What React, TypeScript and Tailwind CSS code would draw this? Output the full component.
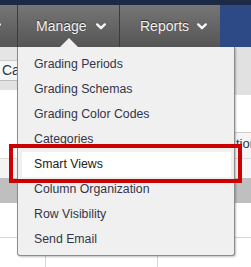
const items = [
  "Grading Periods",
  "Grading Schemas",
  "Grading Color Codes",
  "Categories",
  "Smart Views",
  "Column Organization",
  "Row Visibility",
  "Send Email",
];

function Chevron({ className = "" }: { className?: string }) {
  return (
    <svg width="10" height="7" viewBox="0 0 10 7" className={className}>
      <path d="M1.2 1.4 L5 5.2 L8.8 1.4" fill="none" stroke="#f4f4f4" strokeWidth="2.4" strokeLinecap="round" strokeLinejoin="round" />
    </svg>
  );
}

export default function App() {
  return (
    <div className="relative w-[251px] h-[267px] overflow-hidden bg-white font-['Liberation_Sans',Arial,sans-serif]">
      {/* top nav */}
      <div className="flex h-[47px] border-t-[5px] border-[#1d2a46] bg-gradient-to-b from-[#767676] to-[#555555]">
        <div className="w-[17px] flex items-center overflow-hidden">
          <Chevron className="ml-[-9px] shrink-0" />
        </div>
        <div className="w-px bg-[#3c3c3c]" />
        <div className="w-[101px] flex items-center pl-[18px] gap-[9px] text-[14px] text-[#f0f0f0] [text-shadow:0_-1px_1px_rgba(0,0,0,0.55)]">
          <span>Manage</span>
          <Chevron />
        </div>
        <div className="w-px bg-[#3c3c3c]" />
        <div className="w-[100px] flex items-center pl-[20px] gap-[8px] text-[14px] text-[#f0f0f0] [text-shadow:0_-1px_1px_rgba(0,0,0,0.55)]">
          <span>Reports</span>
          <Chevron />
        </div>
        <div className="flex-1 bg-[#2e4a86]" />
      </div>

      {/* table behind the menu */}
      <div className="flex h-[190px]">
        <div className="w-[17px] flex flex-col overflow-hidden">
          <div className="h-[13px] bg-[#e5e5e5]" />
          <div className="h-[20px] bg-[#f6f6f6] border-t border-[#cccccc] pl-[2px] text-[14px] leading-[19px] text-[#2c3650] whitespace-nowrap">
            Categories
          </div>
          <div className="h-[10px] bg-[#e2e2e2] border-t border-[#bdbdbd]" />
          <div className="h-[68px] bg-white" />
          <div className="h-[20px] bg-[#f4f4f4] border-t border-[#dddddd]" />
          <div className="h-[25px] bg-[#bfbfbf]" />
          <div className="flex-1 bg-white" />
        </div>
        <div className="flex-1 bg-white" />
        <div className="w-[16px] flex flex-col overflow-hidden">
          <div className="h-[48px] bg-[#e1e1e1]" />
          <div className="h-[37px] bg-white" />
          <div className="h-[26px] bg-[#f5f5f5] border-t border-[#cccccc] pl-px text-[13px] leading-[21px] text-[#2c3650] whitespace-nowrap">
            tion
          </div>
          <div className="h-[20px] bg-[#f7f7f7] border-t border-[#dddddd]" />
          <div className="h-[25px] bg-[#bfbfbf]" />
          <div className="flex-1 bg-white" />
        </div>
      </div>
      <div className="flex h-[30px] border-t border-[#d6d6d6]">
        <div className="w-[45px]" />
        <div className="w-[112px] border-l border-[#d6d6d6]" />
        <div className="flex-1 border-l border-[#d6d6d6]" />
      </div>

      {/* dropdown notch */}
      <svg width="20" height="10" viewBox="0 0 20 10" className="absolute left-[59px] top-[38px]">
        <polygon points="0,10 10,0 20,10" fill="#f0f0f0" />
      </svg>

      {/* dropdown menu */}
      <div className="absolute left-[17px] top-[47px] w-[218px] h-[209px] bg-[#f0f0f0] border-x border-b border-[#8c8c8c] rounded-b-[3px] shadow-[1px_1px_2px_rgba(0,0,0,0.25)] pt-[5px]">
        {items.map((label) =>
          label === "Smart Views" ? (
            <div key={label} className="h-[25px] ml-[4px] mr-[3px] bg-white pl-[12px] flex items-center text-[12.3px] text-[#222222]">
              {label}
            </div>
          ) : (
            <div key={label} className="h-[25px] pl-[16px] flex items-center text-[12.3px] text-[#33364a]">
              {label}
            </div>
          )
        )}
      </div>

      {/* highlight box */}
      <div className="absolute left-[9px] top-[144px] w-[233px] h-[39px] border-4 border-[#cc0000]" />
    </div>
  );
}
